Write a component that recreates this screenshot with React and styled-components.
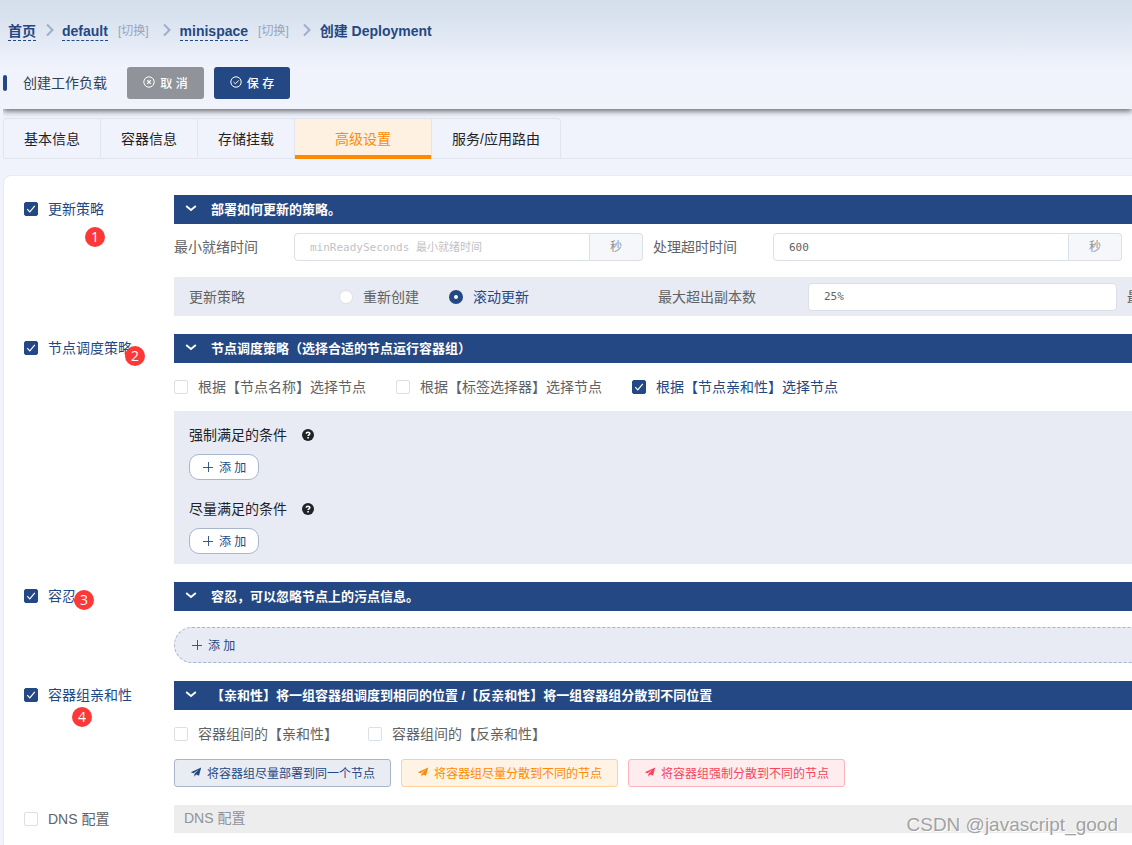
import React from 'react';
import styled, { createGlobalStyle } from 'styled-components';

const navy = '#244883';
const orange = '#ff8a00';
const line = '#dcdfe6';
const wash = '#e8ebf3';

const GlobalStyle = createGlobalStyle`
  *, *::before, *::after { box-sizing: border-box; }
  body {
    margin: 0;
    background: #f0f3fc;
    color: #606266;
    font: 14px/20px "Liberation Sans", "Noto Sans CJK SC", sans-serif;
  }
  button, input { font-family: inherit; }
`;

const Page = styled.div`
  position: relative;
  display: flex;
  flex-direction: column;
  min-height: 100vh;
  overflow: hidden;
  background: linear-gradient(#d4dfec, #d8e2ee 25%, #f0f3fc) 0 0 / 100% 68px no-repeat;
`;

const PageHead = styled.header`
  height: 109px;
  margin-left: 3px;
  box-shadow: 0 2px 6px rgba(0, 0, 0, 0.6);
  clip-path: inset(0 0 -12px 0);
`;

const Breadcrumb = styled.nav`
  display: flex;
  align-items: center;
  height: 62px;
  padding-left: 5px;
  color: ${navy};
  font-weight: bold;
`;

const Crumb = styled.a`
  color: ${navy};
  line-height: 18px;
  text-decoration: none;
  border-bottom: 1px dashed ${navy};
`;

const Switch = styled.a`
  margin-left: 10px;
  color: #95a5c2;
  font-size: 12px;
  font-weight: normal;
  text-decoration: none;
`;

const Separator = styled.svg`
  width: 8px;
  height: 14px;
  margin: 0 ${p => (p.$first ? 8 : 9)}px 2px ${p => (p.$first ? 10 : 14)}px;
  fill: none;
  stroke: #9eaecb;
  stroke-width: 2;
`;

const Toolbar = styled.div`
  display: flex;
  align-items: center;
  gap: 10px;
  padding-top: 5px;
`;

const Title = styled.h1`
  display: flex;
  align-items: center;
  margin: 0 10px 0 0;
  color: #303f55;
  font-size: 14px;
  font-weight: normal;
  line-height: 20px;
  &::before {
    content: '';
    width: 4px;
    height: 16px;
    margin-right: 16px;
    background: ${navy};
    border-radius: 2px;
  }
`;

const ActionButton = styled.button`
  display: flex;
  align-items: center;
  justify-content: center;
  gap: 5px;
  width: ${p => (p.$primary ? 76 : 77)}px;
  height: 32px;
  padding: 0 0 2px;
  border: 0;
  border-radius: 3px;
  color: #fff;
  background: ${p => (p.$primary ? navy : '#909399')};
  font-size: 12px;
  font-weight: 500;
  white-space: pre;
`;

const Tabs = styled.div`
  display: flex;
  height: 41px;
  margin: 9px 0 0 3px;
  border-bottom: 1px solid #e1e5ee;
`;

const Tab = styled.button`
  height: ${p => (p.$active ? 41 : 40)}px;
  padding: 0 ${p => (p.$active ? 40 : 20)}px;
  border: solid #e1e5ee;
  border-width: 1px 0 0 1px;
  color: ${p => (p.$active ? orange : '#1f2329')};
  background: ${p => (p.$active ? '#fff1e1' : 'transparent')};
  box-shadow: ${p => (p.$active ? `inset 0 -4px ${orange}` : 'none')};
  font-size: 14px;
  line-height: 20px;
  &:first-child { border-top-left-radius: 4px; }
  &:last-child { border-right-width: 1px; border-top-right-radius: 4px; }
`;

const Card = styled.main`
  display: flex;
  flex: 1;
  flex-direction: column;
  gap: 18px;
  margin: 16px 0 0 3px;
  padding: 19px 0 12px 20px;
  background: #fff;
  border: solid #e7ebf4;
  border-width: 1px 0 0 1px;
  border-radius: 8px 0 0 0;
`;

const Section = styled.section`
  display: grid;
  grid-template-columns: 150px minmax(0, 1fr);
`;

const Aside = styled.div`
  position: relative;
  height: 28px;
`;

const Choice = styled.label`
  display: flex;
  align-items: center;
  gap: 10px;
  height: 28px;
  color: ${p => (p.$on ? navy : '#606266')};
  white-space: nowrap;
`;

const Tick = styled.input`
  appearance: none;
  flex: none;
  width: 14px;
  height: 14px;
  margin: 0;
  border: 1px solid ${line};
  border-radius: ${p => (p.type === 'radio' ? '50%' : '2px')};
  background: #fff;
  &[type='checkbox']:checked {
    border-color: ${navy};
    background: ${navy} url("data:image/svg+xml,%3Csvg xmlns='http://www.w3.org/2000/svg' viewBox='0 0 12 12'%3E%3Cpath d='M2.2 6.2 4.8 8.8 9.8 2.8' fill='none' stroke='white' stroke-width='1.2'/%3E%3C/svg%3E") center / 12px 12px;
  }
  &[type='radio']:checked { border: 5px solid ${navy}; }
`;

const Badge = styled.span`
  position: absolute;
  left: ${p => p.$x}px;
  top: ${p => p.$y}px;
  width: 20px;
  height: 20px;
  border-radius: 50%;
  color: #fff;
  background: #fd3838;
  font: 14px/19px "Open Sans", sans-serif;
  text-align: center;
`;

const Banner = styled.button`
  display: flex;
  align-items: center;
  gap: 14px;
  width: 100%;
  height: 29px;
  padding: 0 0 3px 11px;
  border: 0;
  color: #fff;
  background: ${navy};
  font-size: 13px;
  font-weight: bold;
  white-space: nowrap;
`;

const FieldRow = styled.div`
  display: grid;
  grid-template-columns: repeat(2, minmax(0, 1fr));
  gap: 10px;
  margin: 9px 10px 16px 0;
`;

const StrategyRow = styled.div`
  display: grid;
  grid-template-columns: repeat(2, minmax(0, 1fr)) 5px;
  align-items: center;
  gap: 10px;
  height: 39px;
  padding-left: 15px;
  background: ${wash};
  white-space: nowrap;
`;

const Field = styled.div`
  display: flex;
  align-items: center;
`;

const FieldLabel = styled.label`
  flex: none;
  width: ${p => p.$width || 120}px;
`;

const TextInput = styled.input`
  flex: 1;
  min-width: 0;
  height: 28px;
  padding: 0 15px;
  border: 1px solid ${line};
  border-radius: ${p => (p.$joined ? '4px 0 0 4px' : '4px')};
  color: #606266;
  background: #fff;
  font: 11px "DejaVu Sans Mono", "Noto Sans CJK SC", monospace;
  &::placeholder { color: #bfc2c9; opacity: 1; }
`;

const Unit = styled.span`
  width: 53px;
  height: 28px;
  border: 1px solid ${line};
  border-left: 0;
  border-radius: 0 4px 4px 0;
  color: #909399;
  background: #f5f7fa;
  font-size: 12px;
  line-height: 26px;
  text-align: center;
`;

const ChoiceRow = styled.div`
  display: flex;
  gap: 30px;
  padding: 10px 0;
`;

const RadioRow = styled.div`
  display: flex;
  gap: 30px;
`;

const Panel = styled.div`
  display: flex;
  flex-direction: column;
  gap: 19px;
  padding: 14px 15px 10px;
  background: ${wash};
`;

const Condition = styled.div`
  display: flex;
  flex-direction: column;
  align-items: flex-start;
  gap: 9px;
`;

const ConditionTitle = styled.div`
  display: flex;
  align-items: center;
  gap: 15px;
  color: #1f2329;
`;

const PillButton = styled.button`
  display: flex;
  align-items: center;
  gap: 5px;
  width: 70px;
  height: 26px;
  padding: 0 0 1px 12px;
  border: 1px solid #a7b6cd;
  border-radius: 10px;
  color: ${navy};
  background: #fff;
  font-size: 12px;
  white-space: pre;
`;

const WideAdd = styled(PillButton)`
  width: calc(100% + 20px);
  height: 36px;
  margin-top: 16px;
  padding-left: 16px;
  border-style: dashed;
  border-radius: 18px;
  background: ${wash};
`;

const tones = {
  navy: [navy, '#e9edf3', '#a7b6cd'],
  orange: [orange, '#fff3e6', '#ffd09a'],
  red: ['#f9435a', '#ffecef', '#fdb4bf'],
};

const PresetRow = styled.div`
  display: flex;
  gap: 10px;
  padding-top: 1px;
`;

const Preset = styled.button`
  display: flex;
  align-items: center;
  justify-content: center;
  gap: 5px;
  width: 217px;
  height: 28px;
  padding: 0 0 2px;
  border: 1px solid ${p => tones[p.$tone][2]};
  border-radius: 3px;
  color: ${p => tones[p.$tone][0]};
  background: ${p => tones[p.$tone][1]};
  font-size: 12px;
  white-space: nowrap;
`;

const Disabled = styled.div`
  height: 28px;
  padding-left: 10px;
  color: #909399;
  background: #ededed;
  line-height: 27px;
`;

const Watermark = styled.div`
  position: absolute;
  right: 14px;
  bottom: 8px;
  color: #a2a2a2;
  font: 19px/24px "Liberation Sans", sans-serif;
  text-shadow: 1px 1px 0 #fff;
`;

const Svg = ({ size = 12, view = 12, children, ...rest }) => (
  <svg width={size} height={size} viewBox={`0 0 ${view} ${view}`} fill="none" stroke="currentColor" aria-hidden="true" {...rest}>
    {children}
  </svg>
);
const CancelIcon = () => (
  <Svg><circle cx="6" cy="6" r="5.2" /><path d="M4.2 4.2 7.8 7.8M7.8 4.2 4.2 7.8" strokeWidth="1.2" /></Svg>
);
const SaveIcon = () => (
  <Svg><circle cx="6" cy="6" r="5.2" /><path d="M3.6 6.1 5.4 7.8 8.7 4.4" /></Svg>
);
const Plus = () => <Svg><path d="M1 6.5H11M6.5 1V11" strokeWidth="0.9" /></Svg>;
const Down = () => <Svg strokeWidth="1.8"><path d="M1.2 4 6 8 10.8 4" /></Svg>;
const Plane = () => (
  <Svg fill="currentColor" stroke="none">
    <path d="M11.2 1.4 .8 6.2 3.6 7.3 8.6 3.4 4.4 7.9V10.8L6.1 8.6 9 9.8Z" />
  </Svg>
);
const Question = () => (
  <Svg>
    <circle cx="6" cy="6" r="6" fill="currentColor" stroke="none" />
    <path d="M4.2 4.7C4.3 2.7 7.8 2.7 7.8 4.6 7.8 5.8 6.1 5.8 6.1 7.1M6.1 8V9.4" stroke="#fff" strokeWidth="1.6" />
  </Svg>
);
const Chevron = ({ first }) => (
  <Separator $first={first} viewBox="0 0 8 14" aria-hidden="true"><path d="M1 1.5 6.5 7 1 12.5" /></Separator>
);

const Check = ({ children, checked, type = 'checkbox', name }) => (
  <Choice $on={checked}>
    <Tick type={type} name={name} defaultChecked={checked} />
    {children}
  </Choice>
);

const Block = ({ label, checked, badge, title, children }) => (
  <Section>
    <Aside>
      <Check checked={checked}>{label}</Check>
      {badge && <Badge $x={badge.x} $y={badge.y}>{badge.n}</Badge>}
    </Aside>
    <div>
      {title && <Banner type="button"><Down />{title}</Banner>}
      {children}
    </div>
  </Section>
);

export default function App() {
  return (
    <Page>
      <GlobalStyle />
      <PageHead>
        <Breadcrumb>
          <Crumb href="#home">首页</Crumb>
          <Chevron first />
          <Crumb href="#default">default</Crumb>
          <Switch href="#cluster">[切换]</Switch>
          <Chevron />
          <Crumb href="#minispace">minispace</Crumb>
          <Switch href="#space">[切换]</Switch>
          <Chevron />
          <span>创建 Deployment</span>
        </Breadcrumb>
        <Toolbar>
          <Title>创建工作负载</Title>
          <ActionButton type="button"><CancelIcon />取 消</ActionButton>
          <ActionButton type="button" $primary><SaveIcon />保 存</ActionButton>
        </Toolbar>
      </PageHead>

      <Tabs role="tablist">
        {['基本信息', '容器信息', '存储挂载', '高级设置', '服务/应用路由'].map((name, i) => (
          <Tab key={name} type="button" role="tab" aria-selected={i === 3} $active={i === 3}>{name}</Tab>
        ))}
      </Tabs>

      <Card>
        <Block label="更新策略" checked badge={{ n: 1, x: 61, y: 32 }} title="部署如何更新的策略。">
          <FieldRow>
            <Field>
              <FieldLabel htmlFor="ready">最小就绪时间</FieldLabel>
              <TextInput id="ready" $joined placeholder="minReadySeconds 最小就绪时间" />
              <Unit>秒</Unit>
            </Field>
            <Field>
              <FieldLabel htmlFor="timeout">处理超时时间</FieldLabel>
              <TextInput id="timeout" $joined defaultValue="600" />
              <Unit>秒</Unit>
            </Field>
          </FieldRow>
          <StrategyRow>
            <Field>
              <FieldLabel as="span" $width={150}>更新策略</FieldLabel>
              <RadioRow>
                <Check type="radio" name="strategy">重新创建</Check>
                <Check type="radio" name="strategy" checked>滚动更新</Check>
              </RadioRow>
            </Field>
            <Field>
              <FieldLabel htmlFor="surge" $width={150}>最大超出副本数</FieldLabel>
              <TextInput id="surge" defaultValue="25%" />
            </Field>
            <span>最大不可用副本数</span>
          </StrategyRow>
        </Block>

        <Block label="节点调度策略" checked badge={{ n: 2, x: 101, y: 12 }} title="节点调度策略（选择合适的节点运行容器组）">
          <ChoiceRow>
            <Check>根据【节点名称】选择节点</Check>
            <Check>根据【标签选择器】选择节点</Check>
            <Check checked>根据【节点亲和性】选择节点</Check>
          </ChoiceRow>
          <Panel>
            {['强制满足的条件', '尽量满足的条件'].map(name => (
              <Condition key={name}>
                <ConditionTitle>{name}<Question /></ConditionTitle>
                <PillButton type="button"><Plus />添 加</PillButton>
              </Condition>
            ))}
          </Panel>
        </Block>

        <Block label="容忍" checked badge={{ n: 3, x: 50, y: 8 }} title="容忍，可以忽略节点上的污点信息。">
          <WideAdd type="button"><Plus />添 加</WideAdd>
        </Block>

        <Block label="容器组亲和性" checked badge={{ n: 4, x: 48, y: 26 }} title="【亲和性】将一组容器组调度到相同的位置 /【反亲和性】将一组容器组分散到不同位置">
          <ChoiceRow>
            <Check>容器组间的【亲和性】</Check>
            <Check>容器组间的【反亲和性】</Check>
          </ChoiceRow>
          <PresetRow>
            <Preset type="button" $tone="navy"><Plane />将容器组尽量部署到同一个节点</Preset>
            <Preset type="button" $tone="orange"><Plane />将容器组尽量分散到不同的节点</Preset>
            <Preset type="button" $tone="red"><Plane />将容器组强制分散到不同的节点</Preset>
          </PresetRow>
        </Block>

        <Block label="DNS 配置">
          <Disabled>DNS 配置</Disabled>
        </Block>
      </Card>
      <Watermark>CSDN @javascript_good</Watermark>
    </Page>
  );
}
